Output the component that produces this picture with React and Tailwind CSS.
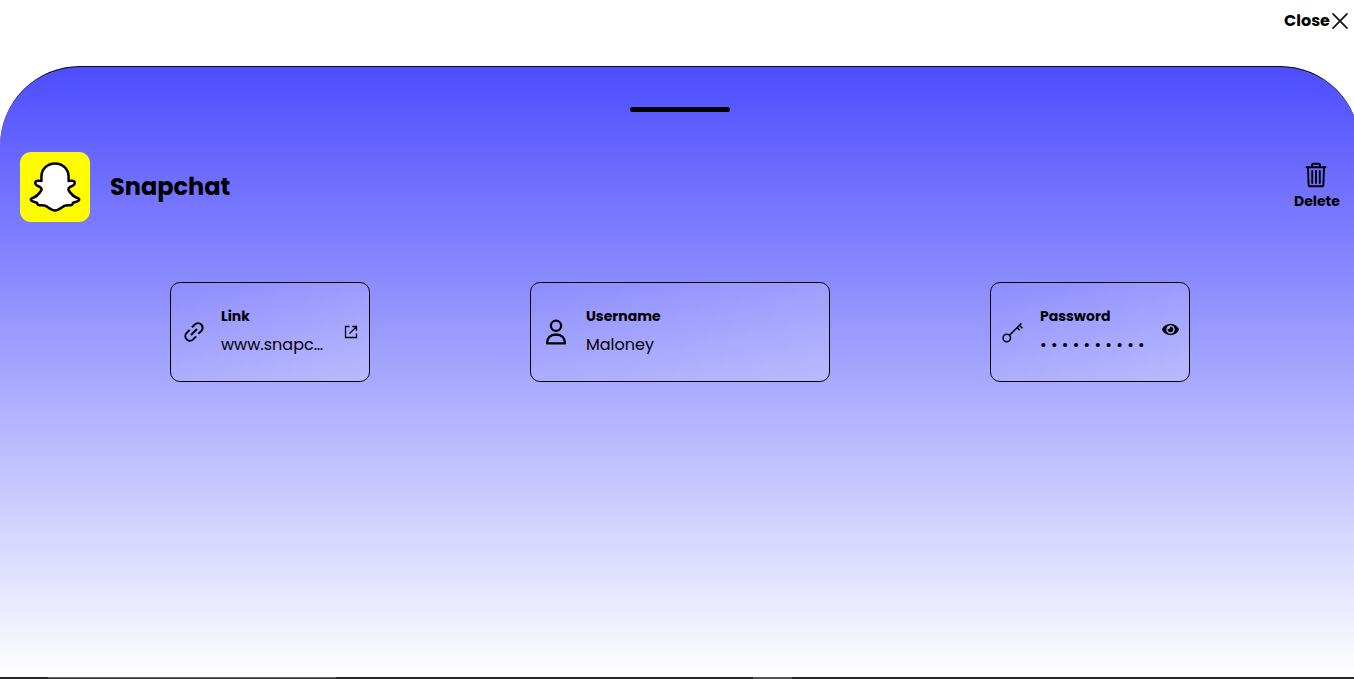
import { FaEye } from "react-icons/fa";

function CloseIcon() {
  return (
    <svg className="size-[18px] shrink-0" viewBox="0 0 18 18" fill="none" stroke="#111" strokeWidth="1.7" strokeLinecap="round">
      <path d="M2 1.8 16 16.2M16 1.8 2 16.2" />
    </svg>
  );
}

function TrashIcon() {
  return (
    <svg className="h-[26px] w-[22px]" viewBox="0 0 22 26" fill="none" stroke="#000" strokeWidth="1.9" strokeLinecap="round" strokeLinejoin="round">
      <path d="M1.5 5.2H20.5M7 5V2.9Q7 1.8 8.1 1.8H13.9Q15 1.8 15 2.9V5" />
      <path d="M3 5.4 3.6 22.6Q3.7 24.3 5.4 24.3H16.6Q18.3 24.3 18.4 22.6L19 5.4" />
      <path d="M7.2 9V21M11 9V21M14.8 9V21" />
    </svg>
  );
}

function SnapchatLogo() {
  return (
    <svg className="size-[70px] shrink-0" viewBox="0 0 70 70">
      <rect width="70" height="70" rx="11" fill="#fffc00" />
      <path
        d="M35 11.4C26.9 11.4 21.4 17.3 21.4 24.8V29C19.5 28.7 17.7 28.2 16.2 29.1C14.7 30.1 15 32.2 16.7 33.3L20.2 35.2C21.7 36.1 22 36.9 21.2 38.5C18.8 42.5 15.6 45.2 11.4 46.5C10.4 47 10.7 48.1 11.6 48.8C13.2 49.9 15.2 50.2 16.9 50.6C17.5 51.7 17.6 52.6 18.6 53.1C20.6 53.7 23.5 52.8 26.1 54.2C28.7 55.7 31.4 58.5 35 58.5S41.3 55.7 43.9 54.2C46.5 52.8 49.4 53.7 51.4 53.1C52.4 52.6 52.5 51.7 53.1 50.6C54.8 50.2 56.8 49.9 58.4 48.8C59.3 48.1 59.6 47 58.6 46.5C54.4 45.2 51.2 42.5 48.8 38.5C48 36.9 48.3 36.1 49.8 35.2L53.3 33.3C55 32.2 55.3 30.1 53.8 29.1C52.3 28.2 50.5 28.7 48.6 29V24.8C48.6 17.3 43.1 11.4 35 11.4Z"
        fill="#fff"
        stroke="#000"
        strokeWidth="2.5"
        strokeLinejoin="round"
      />
    </svg>
  );
}

function LinkIcon() {
  return (
    <svg className="size-5" viewBox="0 0 20 20" fill="none" stroke="#000" strokeWidth="2" strokeLinecap="butt">
      <path d="M7.9 5.4 10.8 2.5A4.3 4.3 0 0 1 17.3 8.9L14.3 11.9" />
      <path d="M5.7 7.9 2.7 10.9A4.3 4.3 0 0 0 9.1 17.4L12.1 14.4" />
      <path d="M7 13 13 7" />
    </svg>
  );
}

function OpenIcon() {
  return (
    <svg className="size-3.5" viewBox="0 0 14 14" fill="none" stroke="#000" strokeWidth="1.3">
      <path d="M5.5 1.5H1.5V12.5H12.5V8.6M8.3 1.5H12.5V5.8M12.4 1.7 5.5 8.6" />
    </svg>
  );
}

function UserIcon() {
  return (
    <svg className="h-[26px] w-[22px]" viewBox="0 0 22 26" fill="none" stroke="#000" strokeWidth="2.3" strokeLinejoin="round">
      <circle cx="11" cy="6.8" r="5.1" />
      <path d="M2 24.4C2 18.8 5.4 15.5 11 15.5S20 18.8 20 24.4Z" />
    </svg>
  );
}

function KeyIcon() {
  return (
    <svg className="size-[22px]" viewBox="0 0 22 22" fill="none" stroke="#000" strokeWidth="1.5">
      <circle cx="4.8" cy="17" r="3.7" />
      <path d="M7.4 14.4 19.4 2.4M15.2 6.6 17.8 9.2M17.4 4.2 20.4 7.2" />
    </svg>
  );
}

function Card({ className, children }) {
  return (
    <div className={`flex h-[100px] items-center rounded-[10px] border border-black bg-[linear-gradient(135deg,rgba(255,255,255,0),rgba(255,255,255,0.2))] ${className}`}>
      {children}
    </div>
  );
}

export default function App() {
  return (
    <div className="flex h-[679px] w-full flex-col overflow-hidden bg-white font-['Poppins','Inter',sans-serif] text-black">
      <header className="flex h-[66px] shrink-0 items-start justify-end pt-2 pr-[5px]">
        <button className="flex h-[25px] items-center gap-px">
          <span className="w-[46px] whitespace-nowrap text-base leading-6 font-bold">Close</span>
          <CloseIcon />
        </button>
      </header>

      <main className="flex h-[611px] w-[1360px] shrink-0 flex-col rounded-t-[80px] border-t border-black bg-[linear-gradient(to_bottom,#4d4dff,#ffffff)] px-2.5 pt-10">
        <div className="h-[5px] w-[100px] self-center rounded-full bg-black" />

        <section className="mt-10 flex h-[70px] items-center justify-between px-2.5">
          <div className="flex items-center gap-5">
            <SnapchatLogo />
            <h1 className="text-[24px] leading-9 font-bold">Snapchat</h1>
          </div>
          <button className="flex w-[46px] flex-col items-center pb-px">
            <span className="mr-0.5"><TrashIcon /></span>
            <span className="mt-[3px] text-sm leading-[21px] font-bold">Delete</span>
          </button>
        </section>

        <section className="mt-[60px] flex justify-evenly">
          <Card className="w-[200px] pl-[13px]">
            <LinkIcon />
            <div className="ml-[17px] w-[104px] pb-px">
              <div className="text-sm leading-[21px] font-bold">Link</div>
              <div className="mt-1.5 whitespace-nowrap text-base leading-6">www.snapc…</div>
            </div>
            <div className="ml-[19px] pb-px"><OpenIcon /></div>
          </Card>

          <Card className="w-[300px] pl-3.5">
            <UserIcon />
            <div className="ml-[19px] pb-px">
              <div className="text-sm leading-[21px] font-bold">Username</div>
              <div className="mt-1.5 text-base leading-6">Maloney</div>
            </div>
          </Card>

          <Card className="w-[200px] pl-[11px]">
            <KeyIcon />
            <div className="ml-4 w-[105px] pb-px">
              <div className="text-sm leading-[21px] font-bold">Password</div>
              <div className="mt-1.5 whitespace-nowrap text-base leading-6 tracking-[4.3px]">••••••••••</div>
            </div>
            <FaEye className="-mt-[5px] ml-[17px] size-[17px] shrink-0" />
          </Card>
        </section>
      </main>

      <footer className="flex h-0.5 shrink-0 bg-[#252527]">
        <div className="ml-12 h-full w-72 border-t border-[#666] bg-[#363638]" />
        <div className="ml-[417px] h-full w-[39px] bg-[#555]" />
      </footer>
    </div>
  );
}
